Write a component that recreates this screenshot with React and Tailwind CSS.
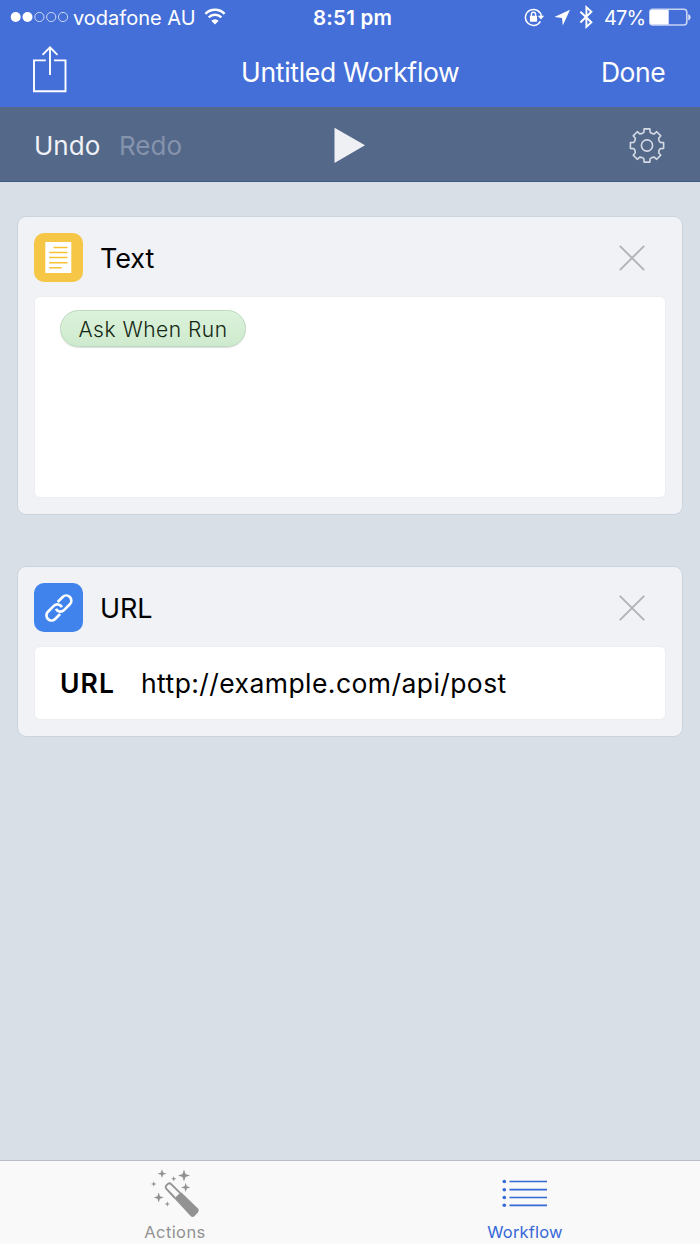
import React from 'react';

const gearPath = (() => {
  const pts = [];
  for (let k = 0; k < 8; k++) {
    const a = (k * Math.PI) / 4;
    const tooth = [[-4.6, -12.2], [-3.1, -13.4], [-2.9, -16.6], [2.9, -16.6], [3.1, -13.4], [4.6, -12.2]];
    tooth.forEach(([x, y]) => {
      const px = x * Math.cos(a) - y * Math.sin(a);
      const py = x * Math.sin(a) + y * Math.cos(a);
      pts.push(`${px.toFixed(2)} ${py.toFixed(2)}`);
    });
  }
  return `M${pts.join('L')}Z`;
})();

const star = (x, y, r) => {
  const q = r * 0.25;
  return `M${x} ${y - r}L${x + q} ${y - q}L${x + r} ${y}L${x + q} ${y + q}L${x} ${y + r}L${x - q} ${y + q}L${x - r} ${y}L${x - q} ${y - q}Z`;
};

function StatusBar() {
  return (
    <div className="flex h-[35px] items-center text-white">
      <svg className="ml-[10px] shrink-0" width="60" height="35" viewBox="10 0 60 35">
        <circle cx="15.7" cy="17" r="5" fill="white" />
        <circle cx="27.5" cy="17" r="5" fill="white" />
        <g fill="none" stroke="white" strokeWidth="0.8" opacity="0.9">
          <circle cx="39.4" cy="17" r="4.6" />
          <circle cx="51.2" cy="17" r="4.6" />
          <circle cx="63" cy="17" r="4.6" />
        </g>
      </svg>
      <span className="ml-[3px] w-[131px] whitespace-nowrap pt-[1px] text-[20px]">vodafone AU</span>
      <svg className="shrink-0" width="22" height="35" viewBox="204 0 22 35" fill="none" stroke="white">
        <path d="M205.4 13.8a13.7 13.7 0 0 1 19.2 0" strokeWidth="2.5" />
        <path d="M208.7 17.3a8.9 8.9 0 0 1 12.6 0" strokeWidth="2.4" />
        <path d="M211.3 20.7a5.3 5.3 0 0 1 7.4 0L215 24.4Z" fill="white" stroke="none" />
      </svg>
      <span className="ml-[87px] w-[211px] whitespace-nowrap pt-[2px] text-[20.5px] font-semibold tracking-[0.2px]">8:51 pm</span>
      <svg className="shrink-0" width="76" height="35" viewBox="524 0 76 35" fill="none" stroke="white">
        <path d="M540.4 21.4a8 8 0 1 1 1-4.8" strokeWidth="1.5" />
        <path d="M537.8 15.8h6.4l-3.2 3.7Z" fill="white" stroke="none" />
        <rect x="529.9" y="15.7" width="7.2" height="6" rx=".7" fill="white" stroke="none" />
        <path d="M531.4 16v-1.6a2.1 2.1 0 0 1 4.2 0V16" strokeWidth="1.4" />
        <path d="M570 9.8L554.4 17l7.6 1 .8 7.4Z" fill="white" stroke="none" />
        <path d="M580.4 11.8l11 10.5-5 4.6V7.2l5 4.5-11 10.8" strokeWidth="1.9" />
      </svg>
      <span className="ml-[4px] w-[45px] whitespace-nowrap pt-[1px] text-[20px] tracking-[-0.9px]">47%</span>
      <svg className="shrink-0" width="43" height="35" viewBox="649 0 43 35">
        <rect x="649.8" y="9.3" width="37" height="15.7" rx="3" fill="none" stroke="#c9d4f3" strokeWidth="1.6" />
        <path d="M652 10h16.7v14.5H652a2 2 0 0 1-2-2V12a2 2 0 0 1 2-2Z" fill="white" />
        <path d="M688.3 14a3.4 3.4 0 0 1 0 6.4Z" fill="#dfe6f8" />
      </svg>
    </div>
  );
}

function Card({ icon, title, className, children }) {
  return (
    <section className={`mx-[17px] rounded-[9px] border border-[#cbd3dd] bg-[#f0f2f6] px-4 ${className}`}>
      <header className="flex h-[79px] items-center pt-[2px]">
        {icon}
        <h2 className="ml-[17px] grow pt-[3px] text-[27px] tracking-[-0.1px]">{title}</h2>
        <svg className="mr-[20px]" width="28" height="28" viewBox="0 0 28 28">
          <path d="M1.8 1.8l24.4 24.4M26.2 1.8L1.8 26.2" stroke="#b2b3b6" strokeWidth="1.9" />
        </svg>
      </header>
      {children}
    </section>
  );
}

const textIcon = (
  <svg width="49" height="49" viewBox="0 0 49 49">
    <rect width="49" height="49" rx="10" fill="#f6c646" />
    <rect x="11.3" y="9" width="26" height="31" fill="white" />
    <path d="M19.5 14.5h14M15.2 19.5h18.3M15.2 24.5h18.3M15.2 29.7h18.3M15.2 34.7h12.5" stroke="#f6c232" strokeWidth="1.6" />
  </svg>
);

const linkIcon = (
  <svg width="49" height="49" viewBox="0 0 49 49">
    <rect width="49" height="49" rx="10" fill="#4083ec" />
    <g fill="none" stroke="white" strokeWidth="2.6" transform="translate(24.9 25) rotate(-45)">
      <path d="M-3.4 5.1H-10.4a5.1 5.1 0 0 1 0-10.2H-2.1a5.1 5.1 0 0 1 4.9 6.6" />
      <path d="M3.4-5.1H10.4a5.1 5.1 0 0 1 0 10.2H2.1a5.1 5.1 0 0 1-4.9-6.6" />
    </g>
  </svg>
);

export default function App() {
  return (
    <div className="flex h-[1244px] w-[700px] flex-col overflow-hidden bg-[#d8dfe6] font-['Inter',sans-serif] text-black">
      <div className="h-[107px] shrink-0 bg-[#456fd8] text-white">
        <StatusBar />
        <nav className="flex h-[72px] items-center text-[26.5px]">
          <svg className="ml-[32px] shrink-0" width="36" height="72" viewBox="32 35 36 72" fill="none" stroke="white" strokeWidth="1.9">
            <path d="M45.8 60.4H34v30.8h31.5V60.4H54M50 75V47.5M42.5 54.8l7.5-7.5 7.5 7.5" />
          </svg>
          <h1 className="ml-[173px] w-[360px] whitespace-nowrap pt-[3px] tracking-[-0.3px]">Untitled Workflow</h1>
          <button className="pt-[3px] tracking-[-0.5px]">Done</button>
        </nav>
      </div>
      <div className="flex h-[75px] shrink-0 items-center border-b border-[#3d5a86] bg-[#546889] pt-[2px] text-[26px] text-[#f0f2f6]">
        <button className="ml-[34px] w-[85px] text-left">Undo</button>
        <button className="w-[215px] text-left text-[#8593ac]">Redo</button>
        <svg width="32" height="36" viewBox="0 0 32 36"><path d="M.5.7L31 18.3.5 36Z" fill="#eff0f4" /></svg>
        <svg className="ml-[263px]" width="36" height="36" viewBox="-18 -18.5 36 36" fill="none" stroke="#d4dae4" strokeWidth="1.6" strokeLinejoin="round">
          <path d={gearPath} />
          <circle r="5.6" />
        </svg>
      </div>
      <main className="grow pt-[34px]">
        <Card title="Text" icon={textIcon} className="h-[299px]">
          <div className="h-[202px] rounded-[6px] border border-[#eceef2] bg-white pl-[25px] pt-[13px]">
            <span className="flex h-[37px] w-[186px] items-center justify-center whitespace-nowrap rounded-full border border-[#bcdabd] bg-linear-to-b from-[#dcf2db] to-[#ceeace] pt-[2px] text-[21px] font-light tracking-[0.5px] text-[#142714] shadow-[0_1px_1px_#0002]">Ask When Run</span>
          </div>
        </Card>
        <Card title="URL" icon={linkIcon} className="mt-[51px] h-[171px]">
          <div className="flex h-[74px] items-center rounded-[6px] border border-[#eceef2] bg-white pl-[25px] pt-[2px] text-[26.5px]">
            <span className="w-[81px] font-semibold tracking-[1.1px]">URL</span>
            <span className="whitespace-nowrap tracking-[0.43px]">http://example.com/api/post</span>
          </div>
        </Card>
      </main>
      <footer className="flex h-[84px] shrink-0 border-t border-[#b8bdc9] bg-[#f9f9f9] text-[16.5px]">
        <div className="flex w-1/2 flex-col items-center text-[#929292]">
          <svg width="60" height="60" viewBox="145 1161 60 60" fill="#929292">
            <path d={[star(162, 1173.7, 4.4), star(184, 1175.6, 6), star(173.7, 1178.7, 2.7), star(153.7, 1184, 2.7), star(185.7, 1187.4, 4.6), star(158.7, 1197.4, 5), star(167.3, 1204, 2.7)].join('')} />
            <path d="M174.4 1198.5L180.9 1192 198 1208.6q1.6 1.7 0 3.6L194.6 1216q-2 1.8-3.8.2Z" />
            <path d="M175 1198L166.2 1188.6q-1.2-1.5 0-2.9l1.8-1.8q1.4-1.2 2.9 0L180 1192.9" fill="none" stroke="#929292" strokeWidth="1.9" />
          </svg>
          <span className="pt-[1px] leading-[21px] tracking-[0.4px]">Actions</span>
        </div>
        <div className="flex w-1/2 flex-col items-center text-[#3768d8]">
          <svg width="60" height="60" viewBox="495 1161 60 60" fill="#3768d8" stroke="#3768d8">
            <path d="M509.5 1181.5H547M509.5 1189.7H547M509.5 1197.5H547M509.5 1205.3H547" strokeWidth="1.7" />
            <g stroke="none">
              <circle cx="504.3" cy="1181.5" r="1.8" /><circle cx="504.3" cy="1189.7" r="1.8" /><circle cx="504.3" cy="1197.5" r="1.8" /><circle cx="504.3" cy="1205.3" r="1.8" />
            </g>
          </svg>
          <span className="pt-[1px] leading-[21px] tracking-[0.2px]">Workflow</span>
        </div>
      </footer>
    </div>
  );
}
